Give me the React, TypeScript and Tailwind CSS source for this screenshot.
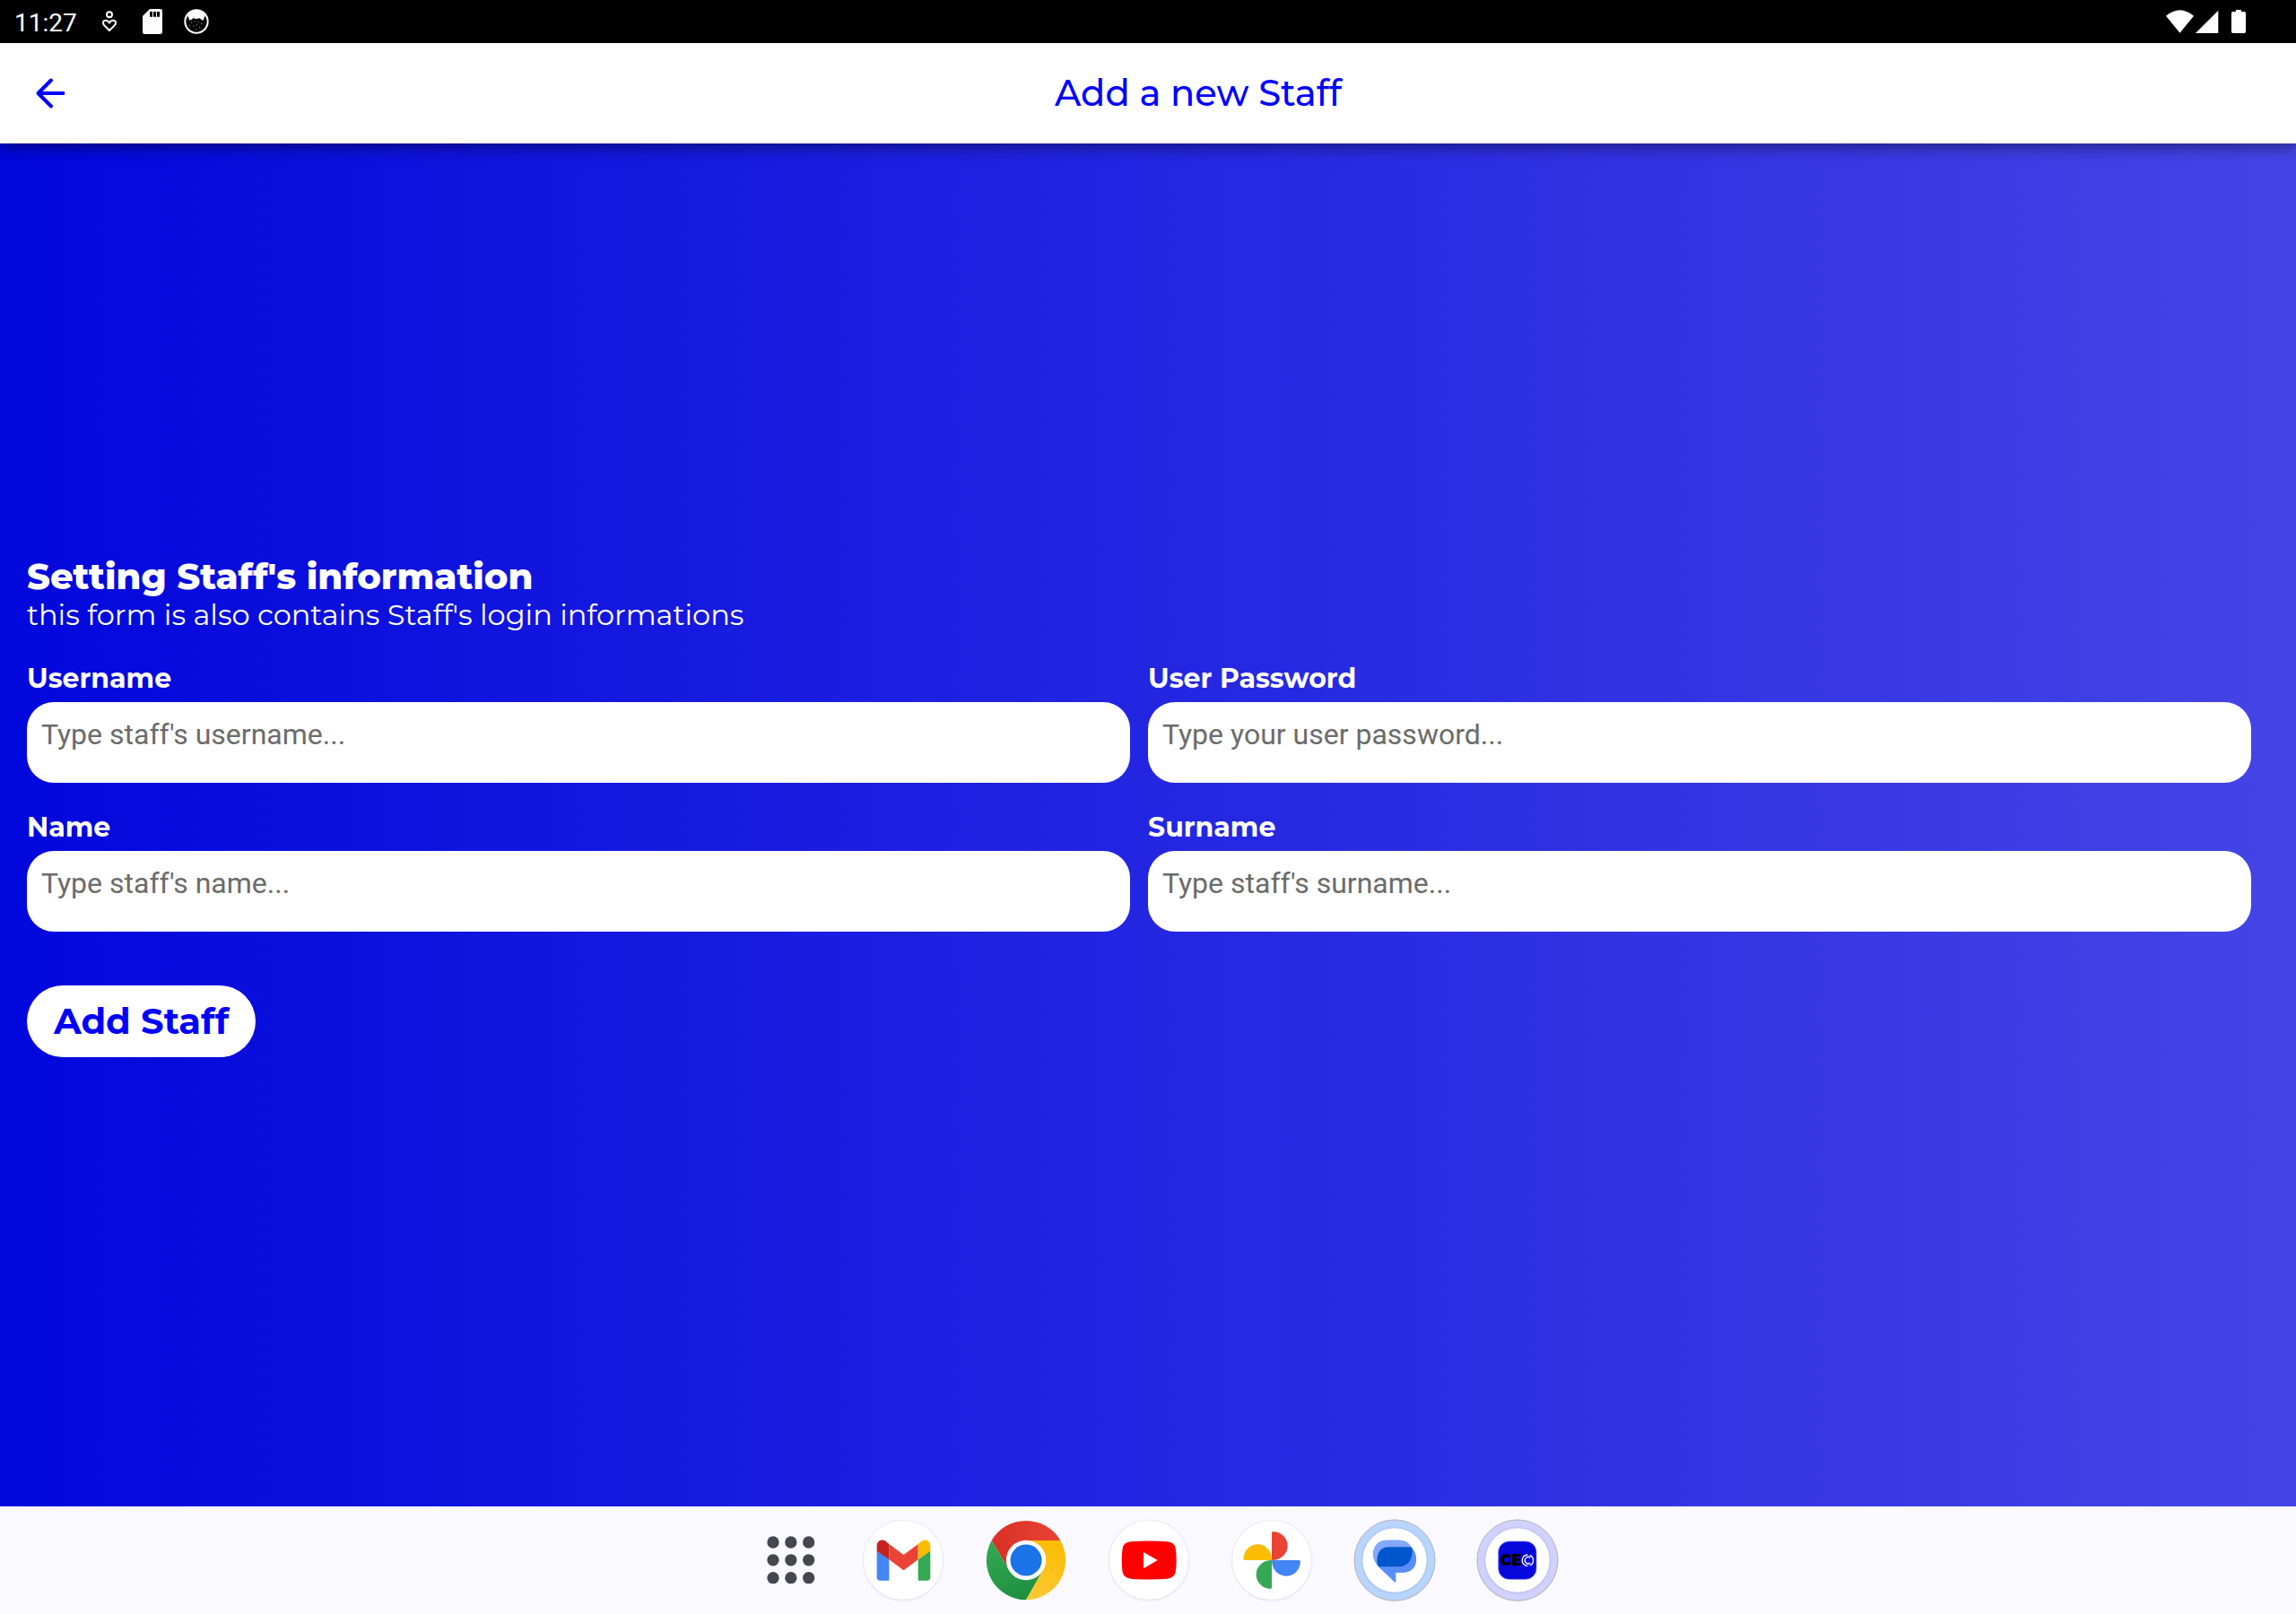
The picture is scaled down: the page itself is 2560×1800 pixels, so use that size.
import type { ReactNode } from 'react';

function StatusBar() {
  return (
    <div className="flex h-12 items-center bg-black pl-4 pr-14 text-white">
      <span className="w-[97px] pt-[3px] font-['Roboto',sans-serif] text-[28px] leading-8">11:27</span>
      <div className="flex flex-1 items-center gap-6">
        <svg viewBox="340 36 52 72" className="mr-1 h-6 w-[18px]" fill="none" stroke="currentColor" strokeWidth="6">
          <circle cx="366" cy="49" r="9" />
          <path d="M366 102L349 85C342 77 344 68 354 68C360 68 364 73 366 77C368 73 372 68 378 68C388 68 390 77 383 85Z" strokeLinejoin="round" />
        </svg>
        <svg viewBox="477 30 66 84" className="h-7 w-[22px]">
          <path d="M501 30H536Q543 30 543 37V107Q543 114 536 114H484Q477 114 477 107V54Z" fill="currentColor" />
          <path d="M501 39h9v17h-9zM513 39h9v17h-9zM525 39h9v17h-9z" fill="#000" />
        </svg>
        <svg viewBox="612 29 84 84" className="size-7">
          <circle cx="654" cy="71" r="38" fill="#000" stroke="currentColor" strokeWidth="6" />
          <path d="M620 64C626 42 640 34 654 34S682 42 688 64L682 52L678 66C672 69 668 62 664 60C658 63 650 63 644 60C640 62 636 69 630 66L626 52Z" fill="currentColor" />
          <g fill="currentColor">
            <circle cx="638" cy="74" r="1.5" /><circle cx="648" cy="70" r="1.5" /><circle cx="661" cy="73" r="1.5" />
            <circle cx="671" cy="78" r="1.5" /><circle cx="644" cy="86" r="1.5" /><circle cx="655" cy="82" r="1.5" />
            <circle cx="665" cy="90" r="1.5" /><circle cx="653" cy="97" r="1.5" /><circle cx="632" cy="84" r="1.5" />
          </g>
        </svg>
      </div>
      <div className="flex items-center">
        <svg viewBox="107 33 92 77" className="h-[26px] w-[31px]">
          <path d="M107 53Q153 14 199 53L153 109Z" fill="currentColor" />
        </svg>
        <svg viewBox="205 33 78 78" className="ml-0.5 size-[26px]">
          <path d="M281 35V111H205Z" fill="currentColor" />
        </svg>
        <svg viewBox="324 33 48 78" className="ml-3.5 h-[26px] w-4">
          <path d="M339 33H357V39H367Q372 39 372 44V106Q372 111 367 111H329Q324 111 324 106V44Q324 39 329 39H339Z" fill="currentColor" />
        </svg>
      </div>
    </div>
  );
}

function Header() {
  return (
    <header className="relative flex h-28 items-center bg-white text-[#0000ff] shadow-[0_4px_16px_rgba(0,0,0,0.45)]">
      <button type="button" aria-label="Back" className="flex h-28 w-28 items-center justify-center">
        <svg viewBox="0 0 48 48" className="size-12" fill="none" stroke="currentColor" strokeWidth="4">
          <path d="M40 24H11" />
          <path d="M25 9.5L10.500 24L25 38.500" strokeLinecap="round" strokeLinejoin="round" />
        </svg>
      </button>
      <h1 className="flex-1 text-center text-[40px] font-medium leading-[48px]">Add a new Staff</h1>
    </header>
  );
}

type FieldProps = { id: string; label: string; placeholder: string; type?: string };

function Field({ id, label, placeholder, type = 'text' }: FieldProps) {
  return (
    <div className="flex flex-col gap-1.5">
      <label htmlFor={id} className="text-[30px] font-bold leading-10 text-white">
        {label}
      </label>
      <input
        id={id}
        type={type}
        placeholder={placeholder}
        className="h-[90px] w-full rounded-[30px] bg-white px-4 pb-[18px] font-['Roboto',sans-serif] text-[32px] text-black outline-none placeholder:text-[#6b6b6b]"
      />
    </div>
  );
}

function AppIcon({ label, viewBox, children }: { label: string; viewBox: string; children: ReactNode }) {
  return (
    <button type="button" aria-label={label} className="size-[90px]">
      <svg viewBox={viewBox} className="size-[90px] overflow-visible">
        {children}
      </svg>
    </button>
  );
}

const disc = 'drop-shadow-[0_1px_4px_rgba(0,0,0,0.16)]';

function Taskbar() {
  return (
    <nav aria-label="Taskbar" className="flex h-[120px] items-center justify-center gap-[47px] bg-[#faf9ff] pb-px pl-[26px]">
      <button type="button" aria-label="All apps" className="flex h-[90px] w-[65px] items-center justify-center">
        <svg viewBox="74 128 162 162" className="size-[54px]" fill="#46464f">
          {[149, 208.5, 268].map((y) => [95, 154.500, 214].map((x) => <circle key={`${x}-${y}`} cx={x} cy={y} r="20" />))}
        </svg>
      </button>

      <AppIcon label="Gmail" viewBox="395 73 270 270">
        <circle cx="530" cy="208" r="132" fill="#fff" className={disc} />
        <path d="M442 176L483 206V276H453Q442 276 442 265Z" fill="#4285f4" />
        <path d="M621 176L580 206V276H610Q621 276 621 265Z" fill="#34a853" />
        <path d="M483 154L531.500 190L580 154V206L531.500 242L483 206Z" fill="#ea4335" />
        <path d="M442 177V160C442 141 462 135 475 147L483 154V206Z" fill="#c5221f" />
        <path d="M621 177V160C621 141 601 135 588 147L580 154V206Z" fill="#fbbc04" />
      </AppIcon>

      <AppIcon label="Chrome" viewBox="805 73 270 270">
        <defs>
          <linearGradient id="chromeRed" x1="0" x2="1"><stop stopColor="#d93025" /><stop offset="1" stopColor="#ea4335" /></linearGradient>
          <linearGradient id="chromeGreen" x1="0.700" y1="1" x2="0.200" y2="0"><stop stopColor="#1e8e3e" /><stop offset="1" stopColor="#34a853" /></linearGradient>
          <linearGradient id="chromeYellow" x1="0.300" y1="1" x2="0.600" y2="0"><stop stopColor="#fcc934" /><stop offset="1" stopColor="#fbbc04" /></linearGradient>
        </defs>
        <path d="M940 208L882.800 241L825 142A133 133 0 0 1 1055 142H940Z" fill="url(#chromeRed)" />
        <path d="M997 241L940 341A133 133 0 0 1 825 142L882.800 241L940 208Z" fill="url(#chromeGreen)" />
        <path d="M940 142H1055A133 133 0 0 1 940 341L997 241L940 208Z" fill="url(#chromeYellow)" />
        <circle cx="940" cy="208" r="66.500" fill="#fff" />
        <circle cx="940" cy="208" r="52.500" fill="#1a73e8" />
      </AppIcon>

      <AppIcon label="YouTube" viewBox="136 73 270 270">
        <circle cx="271" cy="208" r="132" fill="#fff" className={disc} />
        <path d="M210 146Q271 141 333 146Q356 148 360 168Q366 208 360 248Q356 268 333 270Q271 275 210 270Q187 268 183 248Q177 208 183 168Q187 148 210 146Z" fill="#f00" />
        <path d="M253 181L300 208L253 236Z" fill="#fff" />
      </AppIcon>

      <AppIcon label="Photos" viewBox="547 73 270 270">
        <circle cx="682" cy="208" r="132" fill="#fff" className={disc} />
        <path d="M682 208V117Q682 112 687 112C715 113 735 134 735 160S713 208 682 208Z" fill="#ea4335" />
        <path d="M682 208H592Q587 208 587 203C589 176 608 155 635 155S682 177 682 208Z" fill="#fbbc04" />
        <path d="M682 208H773Q778 208 778 213C776 240 757 261 730 261S682 239 682 208Z" fill="#4285f4" />
        <path d="M682 208V299Q682 304 677 304C650 302 630 282 630 256S651 208 682 208Z" fill="#34a853" />
      </AppIcon>

      <AppIcon label="Messages" viewBox="89 73 270 270">
        <circle cx="224" cy="208" r="135" fill="#b8d5ff" stroke="#b5b7bd" strokeWidth="3" className="drop-shadow-[0_1px_2px_rgba(0,0,0,0.2)]" />
        <circle cx="224" cy="208" r="107" fill="#fff" className={disc} />
        <path d="M196 141H238C258 141 274 151 280 165C290 175 296 190 296 206C296 231 279 249 254 249H228V279Q228 285 223 281L172 231C159 218 152 203 152 187C152 160 171 141 196 141Z" fill="#598eff" />
        <path d="M196 141H238C258 141 274 151 280 165C288 197 268 230 238 230H171C159 218 152 203 152 187C152 160 171 141 196 141Z" fill="#82a9ff" />
        <path d="M280 165C291 176 296 190 296 206C296 231 279 249 254 249H190L171 230H238C265 230 287 200 280 165Z" fill="#598eff" />
        <path d="M205 164H280Q283 168 283 179C283 209 265 230 238 230H171Q165 224 165 210C165 181 179 164 205 164Z" fill="#0057cc" />
      </AppIcon>

      <AppIcon label="CEO" viewBox="500 73 270 270">
        <circle cx="635" cy="208" r="135" fill="#d0d1ff" stroke="#b7b7bd" strokeWidth="3" className="drop-shadow-[0_1px_2px_rgba(0,0,0,0.2)]" />
        <circle cx="635" cy="208" r="107" fill="#fff" className={disc} />
        <rect x="571" y="145" width="127" height="127" rx="36" fill="#0808dc" stroke="#7476f0" strokeWidth="2" />
        <text x="577" y="227" fontSize="51" fontWeight="900" fill="#000" fontFamily="Montserrat, Inter, sans-serif">CE</text>
        <g fill="none" stroke="#fff" strokeWidth="4">
          <path d="M669 190A18 18 0 1 0 669 227" />
          <path d="M678 200A11 11 0 1 0 678 217" />
          <path d="M676 191A19 19 0 0 1 676 226" />
        </g>
      </AppIcon>
    </nav>
  );
}

export default function App() {
  return (
    <div className="flex min-h-screen flex-col font-['Montserrat','Inter',sans-serif]">
      <StatusBar />
      <Header />
      <main className="flex flex-1 flex-col justify-center bg-linear-to-r/srgb from-[#0207dc] to-[#4444e6] pb-[42px] pl-[30px] pr-[50px]">
        <form className="flex flex-col">
          <h2 className="text-[40px] font-extrabold leading-[48px] text-white">Setting Staff's information</h2>
          <p className="text-[32px] leading-[38px] text-white">this form is also contains Staff's login informations</p>
          <div className="mt-8 grid grid-cols-2 gap-x-5 gap-y-[30px]">
            <Field id="username" label="Username" placeholder="Type staff's username..." />
            <Field id="password" label="User Password" placeholder="Type your user password..." type="password" />
            <Field id="name" label="Name" placeholder="Type staff's name..." />
            <Field id="surname" label="Surname" placeholder="Type staff's surname..." />
          </div>
          <button type="submit" className="mt-[60px] h-20 self-start rounded-full bg-white px-[30px] text-[40px] font-bold text-[#0000ff]">
            Add Staff
          </button>
        </form>
      </main>
      <Taskbar />
    </div>
  );
}
